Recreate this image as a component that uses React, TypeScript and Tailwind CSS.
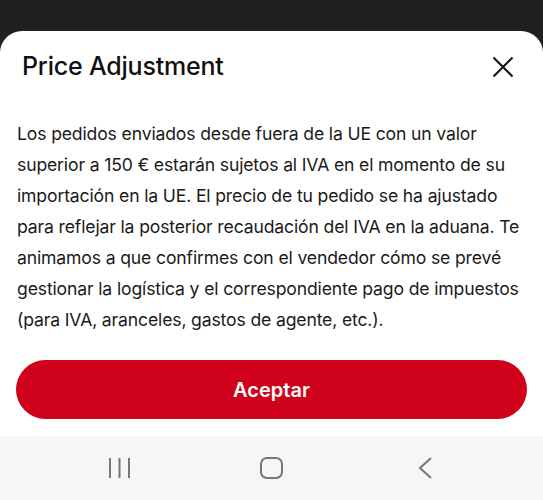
import React from "react";

// Hoja inferior con aviso de ajuste de precio (IVA UE)
export default function App() {
  return (
    <div
      className="w-[543px] h-[500px] bg-[#202020] flex flex-col overflow-hidden"
      style={{ fontFamily: "Inter, 'Noto Sans', sans-serif" }}
    >
      <div className="h-[31px] shrink-0" />

      {/* Sheet */}
      <div className="flex-1 bg-white rounded-t-[22px] flex flex-col">
        {/* Header */}
        <div className="flex items-center justify-between pl-[22px] pr-[29px] pt-[4px] h-[68px]">
          <h2 className="text-[25px] font-medium text-[#111] tracking-[-0.2px]">
            Price Adjustment
          </h2>
          <button className="text-[#111]">
            <svg width="22" height="22" viewBox="0 0 22 22">
              <path d="M1.5 1.5l19 19M20.5 1.5l-19 19" stroke="currentColor" strokeWidth="2" />
            </svg>
          </button>
        </div>

        {/* Body */}
        <div className="pl-[17px] pr-[8px] pt-[19px]">
          <p className="text-[17.6px] leading-[31px] tracking-[-0.15px] text-[#1a1a1a]">
            Los pedidos enviados desde fuera de la UE con un valor superior a
            150 € estarán sujetos al IVA en el momento de su importación en la
            UE. El precio de tu pedido se ha ajustado para reflejar la
            posterior recaudación del IVA en la aduana. Te animamos a que
            confirmes con el vendedor cómo se prevé gestionar la logística y el
            correspondiente pago de impuestos (para IVA, aranceles, gastos de
            agente, etc.).
          </p>
        </div>

        {/* Action */}
        <div className="px-[16px] pt-[25px] pb-[17px]">
          <button className="w-full h-[59px] rounded-full bg-[#D0021B] text-white text-[20px] font-semibold">
            Aceptar
          </button>
        </div>

        {/* Android nav bar */}
        <div className="flex-1 bg-[#F6F6F8] flex items-center pl-[108px] text-[#777]">
          <svg width="23" height="22" viewBox="0 0 23 22">
            <path d="M2 1v20M11.5 1v20M21 1v20" stroke="currentColor" strokeWidth="2" />
          </svg>
          <svg width="23" height="22" viewBox="0 0 23 22" className="ml-[129px]">
            <rect x="1" y="1" width="21" height="20" rx="6" fill="none" stroke="currentColor" strokeWidth="2" />
          </svg>
          <svg width="15" height="22" viewBox="0 0 15 22" className="ml-[135px]">
            <path d="M13 1L2 11l11 10" fill="none" stroke="currentColor" strokeWidth="2" />
          </svg>
        </div>
      </div>
    </div>
  );
}
